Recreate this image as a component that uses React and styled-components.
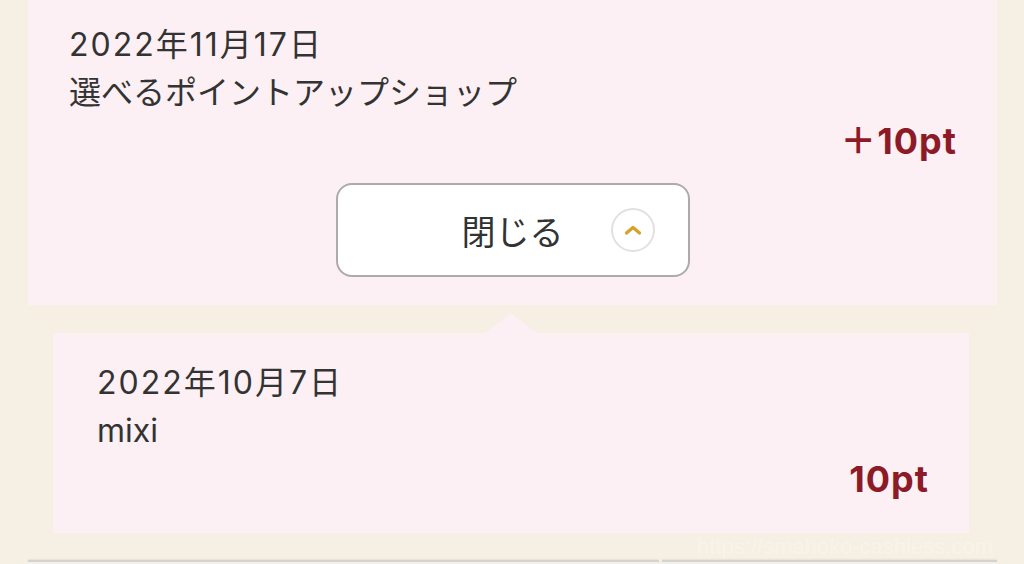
import React from 'react'
import styled, { createGlobalStyle } from 'styled-components'

const GlobalStyle = createGlobalStyle`
    html, body {
        margin: 0;
        padding: 0;
        background: #f6efe3;
        overflow: hidden;
    }
    body {
        font-family: Inter, "Noto Sans CJK JP", sans-serif;
        color: #333;
    }
`

const Page = styled.div`
    width: 1024px;
    height: 564px;
    padding: 0 27px 0 28px;
    box-sizing: border-box;
    display: flex;
    flex-direction: column;
`

const Card = styled.div`
    position: relative;
    background: #fcf0f4;
    margin: ${props => (props.inset ? '28px 28px 0 25px' : '0')};
    padding: ${props => (props.inset ? '26px 41px 30px 44px' : '21px 41px 28px 41px')};
    display: flex;
    flex-direction: column;

    ${props =>
        props.inset &&
        `
        &::before {
            content: '';
            position: absolute;
            top: -20px;
            left: 50%;
            margin-left: -26px;
            border-left: 26px solid transparent;
            border-right: 26px solid transparent;
            border-bottom: 20px solid #fcf0f4;
        }
    `}
`

const Line = styled.div`
    font-family: Inter, "Noto Sans CJK JP", sans-serif;
    font-size: 32px;
    line-height: 48px;
    letter-spacing: ${props => (props.date ? '2px' : '0')};
    color: #333;
`

const Amount = styled.div`
    font-family: Inter, "Noto Sans CJK JP", sans-serif;
    font-weight: 700;
    font-size: 36px;
    line-height: 48px;
    letter-spacing: 1px;
    color: #8c1b27;
    text-align: right;
    margin-right: -1px;
`

const CloseButton = styled.button`
    align-self: center;
    margin-top: 18px;
    width: 354px;
    height: 94px;
    box-sizing: border-box;
    background: #fff;
    border: 2px solid #aeaaaa;
    border-radius: 16px;
    display: grid;
    grid-template-columns: 1fr auto 1fr;
    align-items: center;
    padding: 0 33px;
    font-family: "Noto Sans CJK JP", sans-serif;
    font-size: 34px;
    color: #333;
    cursor: pointer;
`

const ButtonLabel = styled.span`
    grid-column: 2;
`

const IconCircle = styled.span`
    grid-column: 3;
    justify-self: end;
    width: 44px;
    height: 44px;
    box-sizing: border-box;
    border: 2px solid #e3e0de;
    border-radius: 50%;
    display: flex;
    align-items: center;
    justify-content: center;
`

const Footer = styled.div`
    flex: 1;
    display: flex;
    flex-direction: column;
`

const Watermark = styled.div`
    height: 27px;
    text-align: right;
    padding-right: 4px;
    font-family: "Liberation Sans", sans-serif;
    font-size: 22px;
    line-height: 27px;
    color: rgba(255, 255, 255, 0.3);
`

const Tabs = styled.div`
    flex: 1;
    display: grid;
    grid-template-columns: 631px 1fr;
    gap: 3px;
`

const Tab = styled.div`
    border-top: 2px solid #d6d3cb;
    background: #f3f1ec;
    box-shadow: 0 -1px 2px rgba(0, 0, 0, 0.06);
`

const Chevron = () => (
    <svg width="18" height="12" viewBox="0 0 18 12">
        <path d="M2.5 9 L9 3.5 L15.5 9" fill="none" stroke="#d6a22a" strokeWidth="3.4" strokeLinecap="round" strokeLinejoin="round" />
    </svg>
)

function App() {
    return (
        <Page>
            <GlobalStyle />
            <Card>
                <Line date>2022年11月17日</Line>
                <Line>選べるポイントアップショップ</Line>
                <Amount>＋10pt</Amount>
                <CloseButton>
                    <ButtonLabel>閉じる</ButtonLabel>
                    <IconCircle>
                        <Chevron />
                    </IconCircle>
                </CloseButton>
            </Card>
            <Card inset>
                <Line date>2022年10月7日</Line>
                <Line>mixi</Line>
                <Amount>10pt</Amount>
            </Card>
            <Footer>
                <Watermark>https://smahoko-cashless.com</Watermark>
                <Tabs>
                    <Tab />
                    <Tab />
                </Tabs>
            </Footer>
        </Page>
    )
}

export default App
